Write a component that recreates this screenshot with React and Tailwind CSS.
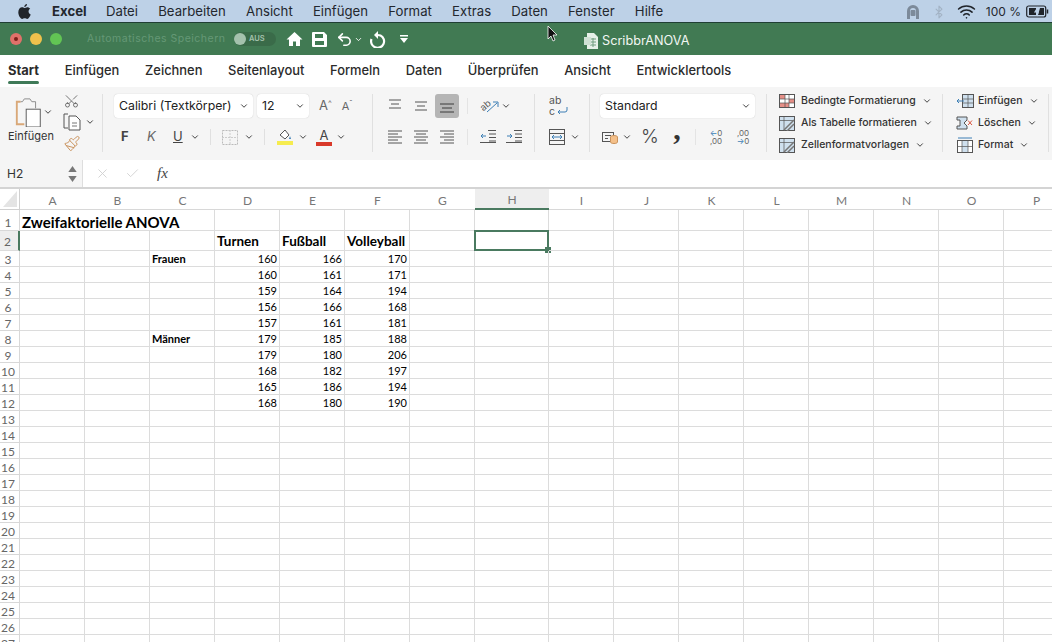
import { ChevronDown, Undo2, Wifi, Bluetooth, X, Check, Scissors, Paintbrush } from "lucide-react";

const MENU = ["Datei", "Bearbeiten", "Ansicht", "Einfügen", "Format", "Extras", "Daten", "Fenster", "Hilfe"];
const TABS = ["Einfügen", "Zeichnen", "Seitenlayout", "Formeln", "Daten", "Überprüfen", "Ansicht", "Entwicklertools"];
const COLS = ["A", "B", "C", "D", "E", "F", "G", "H", "I", "J", "K", "L", "M", "N", "O", "P"];

// row number -> cells by column letter
const DATA = {
  1: { A: "Zweifaktorielle ANOVA" },
  2: { D: "Turnen", E: "Fußball", F: "Volleyball" },
  3: { C: "Frauen", D: 160, E: 166, F: 170 },
  4: { D: 160, E: 161, F: 171 },
  5: { D: 159, E: 164, F: 194 },
  6: { D: 156, E: 166, F: 168 },
  7: { D: 157, E: 161, F: 181 },
  8: { C: "Männer", D: 179, E: 185, F: 188 },
  9: { D: 179, E: 180, F: 206 },
  10: { D: 168, E: 182, F: 197 },
  11: { D: 165, E: 186, F: 194 },
  12: { D: 168, E: 180, F: 190 },
};

function Chev({ className = "" }) {
  return <ChevronDown size={10} strokeWidth={2.4} className={`text-[#444] shrink-0 ${className}`} />;
}

function Lines({ widths, active }) {
  return (
    <svg width="16" height="14" viewBox="0 0 16 14" className="shrink-0">
      {widths.map(([y, a, b]) => (
        <path key={y} d={`M${a} ${y}H${b}`} stroke={active ? "#3a3a3a" : "#555"} strokeWidth="1" />
      ))}
    </svg>
  );
}

function AppleLogo() {
  return (
    <svg width="13" height="15" viewBox="0 0 13 15" fill="#20242a">
      <path d="M9 0c.1 1.600-1.200 3-2.700 3C6.100 1.500 7.500.1 9 0ZM6.400 4c.7 0 1.600-.8 2.900-.8 1.100 0 2.200.6 2.900 1.600-2.400 1.400-2 4.700.5 5.700-.6 1.700-2 4.400-3.500 4.400-.9 0-1.400-.6-2.500-.6s-1.700.6-2.500.6C2.400 14.900.3 11.400.3 8.300.3 5.200 2.300 3.300 4 3.300c1 0 1.800.7 2.400.7Z" />
    </svg>
  );
}

function MenuBar() {
  return (
    <div className="h-[22px] bg-[#bdd1e7] flex items-center pt-[1px] text-[13.2px] text-[#23272e] shrink-0">
      <div className="ml-[18px] w-[34px]"><AppleLogo /></div>
      <span className="font-bold w-[54px]">Excel</span>
      <div className="flex gap-[20.2px]">
        {MENU.map((m) => <span key={m}>{m}</span>)}
      </div>
      <div className="ml-auto flex items-center">
        <svg width="16" height="17" viewBox="0 0 16 17" className="mr-[11px]">
          <path d="M2 16V8a6 6 0 0 1 12 0v8h-3V8a3 3 0 0 0-6 0v8Z" fill="#7c8a9a" />
          <rect x="5.500" y="7" width="5" height="6" rx="1" fill="#7c8a9a" />
        </svg>
        <Bluetooth size={14} className="text-[#a3b3c5] mr-[11px]" />
        <Wifi size={19} strokeWidth={2} className="text-[#20242a] mr-[10px]" />
        <span className="text-[12px] mr-[5px]">100 %</span>
        <svg width="24" height="13" viewBox="0 0 24 13" className="mr-[2px]">
          <rect x=".7" y="1" width="19" height="11" rx="2" fill="none" stroke="#20242a" strokeWidth="1.200" />
          <path d="M3 3h7v7H3ZM14 3h4v7h-6Z" fill="#20242a" />
          <path d="M12 2 9 7h3l-1 4" fill="none" stroke="#bdd1e7" strokeWidth="1.200" />
          <path d="M21.500 4.500v4" stroke="#20242a" strokeWidth="1.500" />
        </svg>
      </div>
    </div>
  );
}

function TitleBar() {
  return (
    <div className="h-[33px] bg-[#417a53] border-t border-[#1f3f34] flex items-center relative shrink-0">
      <div className="ml-[10px] flex gap-[8px] items-center">
        <span className="w-[12px] h-[12px] rounded-full bg-[#e0716a] flex items-center justify-center">
          <span className="w-[4px] h-[4px] rounded-full bg-[#7a1f1a]" />
        </span>
        <span className="w-[12px] h-[12px] rounded-full bg-[#efc14c]" />
        <span className="w-[12px] h-[12px] rounded-full bg-[#62c554]" />
      </div>
      <span className="ml-[25px] text-[10.5px] text-[#659876] tracking-[0.5px] w-[146px] whitespace-nowrap">Automatisches Speichern</span>
      <div className="w-[42px] h-[14px] rounded-full bg-[#3a6b49] flex items-center ml-[1px]">
        <span className="w-[12px] h-[12px] rounded-full bg-[#a4c2ad]" />
        <span className="text-[7.5px] font-semibold text-[#a4c2ad] ml-[3px]">AUS</span>
      </div>
      <svg width="17" height="16" viewBox="0 0 17 16" className="ml-[10px]">
        <path d="M8.500 1 0.500 8.500h2.500V15h4v-4.500h3V15h4V8.500h2.500Z" fill="#fff" />
      </svg>
      <svg width="15" height="15" viewBox="0 0 15 15" className="ml-[9px]">
        <path fillRule="evenodd" d="M1 0h11l3 3v11a1 1 0 0 1-1 1H1a1 1 0 0 1-1-1V1a1 1 0 0 1 1-1Zm2 2v4h8V2Zm0 7v4h9V9Z" fill="#fff" />
      </svg>
      <Undo2 size={17} strokeWidth={2.2} className="text-white ml-[9px]" />
      <ChevronDown size={9} strokeWidth={2.4} className="text-white ml-[1px]" />
      <svg width="16" height="17" viewBox="0 0 16 17" className="ml-[7px]">
        <path d="M1.500 8a6.500 6.500 0 1 0 9-3.500L7.500 4" fill="none" stroke="#fff" strokeWidth="2.200" />
        <path d="M8 0v8L4 4Z" fill="#fff" />
      </svg>
      <svg width="8" height="8" viewBox="0 0 8 8" className="ml-[14px]">
        <path d="M0 0h8v1.500H0ZM0 3h8L4 8Z" fill="#fff" />
      </svg>
      <div className="absolute left-[584px] top-[8px] flex items-center gap-[5px]">
        <svg width="14" height="16" viewBox="0 0 14 16">
          <path d="M3 0h7l4 4v12H3Z" fill="#e6efe8" />
          <path d="M6 6h6M6 9h6M6 12h6M9 5v9" stroke="#6f9c7e" />
          <rect x="0" y="4" width="7" height="8" fill="#cfe0d4" />
        </svg>
        <span className="text-[12.7px] text-[#f1f6f2] -ml-[1px]">ScribbrANOVA</span>
      </div>
      <svg width="12" height="18" viewBox="0 0 12 18" className="absolute left-[547px] top-[2px]">
        <path d="M1 1v13l3-3 2 5 2-1-2-5h4Z" fill="#111" stroke="#fff" strokeWidth=".8" />
      </svg>
    </div>
  );
}

function Tabs() {
  return (
    <div className="h-[32px] bg-white flex items-center pl-[8px] gap-[25.700px] text-[12.9px] text-[#2b2b2b] shrink-0">
      <span className="relative font-bold">
        Start
        <span className="absolute left-0 right-0 top-[20px] h-[3px] rounded-full bg-[#3f7a58]" />
      </span>
      {TABS.map((t) => <span key={t} className="font-medium">{t}</span>)}
    </div>
  );
}

function ClipboardGroup() {
  return (
    <div className="w-[103px] border-r border-[#e0e0e0] flex shrink-0">
      <div className="w-[63px] flex flex-col items-center pt-[2px]">
        <div className="flex items-center pl-[4px] h-[32px]">
          <svg width="30" height="30" viewBox="0 0 30 32">
            <path d="M6 5H2v24h8" fill="none" stroke="#d9a878" strokeWidth="2" />
            <path d="M6 5h2l2-3h6l2 3h4v7" fill="none" stroke="#8a8a8a" />
            <rect x="12" y="13" width="15" height="19" fill="#fff" stroke="#555" />
          </svg>
          <Chev className="ml-[-1px]" />
        </div>
        <span className="text-[11px] text-[#333] -ml-[1px]">Einfügen</span>
      </div>
      <div className="flex flex-col items-start -mt-[1px] gap-[2px]">
        <Scissors size={17} strokeWidth={1.200} className="text-[#555] -rotate-90" />
        <div className="flex items-center mt-[2px]">
          <svg width="19" height="18" viewBox="0 0 19 18">
            <path d="M5 1H1v14h4" fill="none" stroke="#555" />
            <path d="M6 3h7l4 4v10H6Z" fill="#fff" stroke="#555" />
            <path d="M9 10h5M9 13h5" stroke="#777" />
          </svg>
          <Chev className="ml-[3px]" />
        </div>
        <Paintbrush size={18} strokeWidth={1.400} className="text-[#c9935e] mt-[2px]" />
      </div>
    </div>
  );
}

function FontGroup() {
  return (
    <div className="w-[270px] border-r border-[#e0e0e0] pl-[11px] shrink-0">
      <div className="flex items-center">
        <div className="w-[139px] h-[24px] bg-white rounded-[4px] shadow-[0_0_1px_#bbb] flex items-center pl-[5px] pr-[4px] text-[12.3px] text-[#222]">
          <span className="whitespace-nowrap">Calibri (Textkörper)</span>
          <Chev className="ml-auto" />
        </div>
        <div className="ml-[4px] w-[52px] h-[24px] bg-white rounded-[4px] shadow-[0_0_1px_#bbb] flex items-center pl-[5px] pr-[4px] text-[12.3px] text-[#222]">
          12
          <Chev className="ml-auto" />
        </div>
        <span className="ml-[10px] text-[13px] text-[#666]">A<sup className="text-[8px]">^</sup></span>
        <span className="ml-[10px] text-[11px] text-[#666]">A<sup className="text-[8px]">ˇ</sup></span>
      </div>
      <div className="flex items-center mt-[7px] h-[24px] text-[13px] text-[#444]">
        <span className="ml-[7px] w-[26px] font-bold">F</span>
        <span className="w-[26px] italic text-[#666]">K</span>
        <span className="w-[17px] underline">U</span>
        <Chev />
        <span className="ml-[10px] w-px h-[16px] bg-[#e0e0e0]" />
        <svg width="16" height="15" viewBox="0 0 16 15" className="ml-[11px]">
          <rect x=".5" y=".5" width="15" height="14" fill="none" stroke="#bbb" strokeDasharray="2 1" />
          <path d="M8 0v15M0 7.500h16" stroke="#ccc" strokeDasharray="2 1" />
        </svg>
        <Chev className="ml-[6px]" />
        <span className="ml-[10px] w-px h-[16px] bg-[#e0e0e0]" />
        <div className="ml-[12px] w-[16px] flex flex-col items-center">
          <svg width="14" height="12" viewBox="0 0 14 12">
            <path d="M2 6l5-5 4 5-4 4Z" fill="#fff" stroke="#555" />
            <path d="M12 7l1 3h-2Z" fill="#3d7fb5" />
          </svg>
          <span className="w-[16px] h-[4px] bg-[#f6ec4f]" />
        </div>
        <Chev className="ml-[5px]" />
        <div className="ml-[8px] w-[16px] flex flex-col items-center leading-none">
          <span className="text-[13px] text-[#444] h-[12px] leading-[12px]">A</span>
          <span className="w-[16px] h-[4px] bg-[#d9392a] mt-[1px]" />
        </div>
        <Chev className="ml-[4px]" />
      </div>
    </div>
  );
}

function AlignGroup() {
  return (
    <div className="w-[162px] border-r border-[#e0e0e0] pl-[14px] shrink-0">
      <div className="flex items-center h-[24px]">
        <Lines widths={[[1, 2, 14], [5, 4, 12], [9, 2, 14]]} />
        <span className="ml-[10px]"><Lines widths={[[3, 2, 14], [7, 4, 12], [11, 2, 14]]} /></span>
        <div className="w-[24px] h-[24px] rounded-[3px] bg-[#b5b5b5] flex items-center justify-center ml-[6px]">
          <Lines active widths={[[5, 1, 15], [9, 3, 13], [13, 1, 15]]} />
        </div>
        <span className="ml-[8px] w-px h-[16px] bg-[#e4e4e4]" />
        <div className="ml-[11px] w-[19px] h-[18px] relative">
          <span className="block -rotate-[40deg] text-[9.5px] leading-[12px] text-[#555]">ab</span>
          <svg width="13" height="12" viewBox="0 0 13 12" className="absolute left-[7px] top-[4px]">
            <path d="M1 11 11 2M7 1h5v5" fill="none" stroke="#3d7fb5" />
          </svg>
        </div>
        <Chev className="ml-[3px]" />
      </div>
      <div className="flex items-center h-[24px] mt-[7px]">
        <Lines widths={[[1, 1, 15], [4, 1, 11], [7, 1, 15], [10, 1, 11], [13, 1, 15]]} />
        <span className="ml-[10px]"><Lines widths={[[1, 1, 15], [4, 3, 13], [7, 1, 15], [10, 3, 13], [13, 1, 15]]} /></span>
        <span className="ml-[10px]"><Lines widths={[[1, 1, 15], [4, 5, 15], [7, 1, 15], [10, 5, 15], [13, 1, 15]]} /></span>
        <span className="ml-[12px] w-px h-[16px] bg-[#e4e4e4]" />
        <svg width="16" height="14" viewBox="0 0 16 14" className="ml-[12px]">
          <path d="M8 1h8M9 4.500h7M9 8h7M9 11.500h7M0 13h16" stroke="#555" transform="translate(0 -.5)" />
          <path d="M6 6H1M3 4 1 6l2 2" fill="none" stroke="#3d7fb5" />
        </svg>
        <svg width="16" height="14" viewBox="0 0 16 14" className="ml-[10px]">
          <path d="M8 1h8M9 4.500h7M9 8h7M9 11.500h7M0 13h16" stroke="#555" transform="translate(0 -.5)" />
          <path d="M1 6h5M4 4l2 2-2 2" fill="none" stroke="#3d7fb5" />
        </svg>
      </div>
    </div>
  );
}

function WrapGroup() {
  return (
    <div className="w-[55px] border-r border-[#e0e0e0] pl-[14px] shrink-0">
      <div className="h-[24px] flex flex-col justify-center text-[10.5px] leading-[11px] text-[#555]">
        <span>ab</span>
        <div className="flex items-center">
          <span>c</span>
          <svg width="12" height="9" viewBox="0 0 12 9" className="ml-[1px]">
            <path d="M11 0v3a2 2 0 0 1-2 2H2M4 3 2 5l2 2" fill="none" stroke="#3d7fb5" />
          </svg>
        </div>
      </div>
      <div className="h-[24px] mt-[7px] flex items-center">
        <svg width="16" height="16" viewBox="0 0 16 16">
          <rect x=".5" y=".5" width="15" height="15" fill="none" stroke="#555" />
          <path d="M0 4.500h16M0 11.500h16" stroke="#555" />
          <path d="M3 8h10M5 6 3 8l2 2M11 6l2 2-2 2" fill="none" stroke="#3d7fb5" />
        </svg>
        <Chev className="ml-[5px]" />
      </div>
    </div>
  );
}

function NumberGroup() {
  return (
    <div className="w-[177px] border-r border-[#e0e0e0] pl-[10px] shrink-0">
      <div className="w-[155px] h-[24px] bg-white rounded-[4px] shadow-[0_0_1px_#bbb] flex items-center pl-[5px] pr-[4px] text-[12.3px] text-[#222]">
        Standard
        <Chev className="ml-auto" />
      </div>
      <div className="flex items-center h-[24px] mt-[7px]">
        <svg width="16" height="14" viewBox="0 0 16 14" className="ml-[2px]">
          <rect x=".5" y="2.500" width="11" height="9" fill="none" stroke="#555" />
          <path d="M3 5.500h6M3 8.500h3" stroke="#555" />
          <ellipse cx="12" cy="7" rx="3.500" ry="1.500" fill="#f4c08a" stroke="#c9935e" />
          <path d="M8.500 7v5c0 2 7 2 7 0V7" fill="#f4c08a" stroke="#c9935e" />
        </svg>
        <Chev className="ml-[4px]" />
        <span className="ml-[8px] w-[20px] text-center text-[19px] font-light text-[#444]">%</span>
        <span className="ml-[8px] w-[18px] text-center text-[30px] leading-none font-bold text-[#333] font-['Liberation_Serif',serif] -mt-[17px]">,</span>
        <span className="ml-[9px] w-px h-[16px] bg-[#e4e4e4]" />
        <span className="ml-[11px] w-[18px] text-center text-[8px] leading-[8px] text-[#666]">
          <span className="text-[#3d7fb5]">←</span>0<br />,00
        </span>
        <span className="ml-[9px] w-[18px] text-center text-[8px] leading-[8px] text-[#666]">
          ,00<br /><span className="text-[#3d7fb5]">→</span>0
        </span>
      </div>
    </div>
  );
}

function StyleIcon({ kind }) {
  if (kind === "cond") {
    return (
      <svg width="16" height="14" viewBox="0 0 16 14">
        <rect x=".5" y=".5" width="15" height="13" fill="#fff" stroke="#555" />
        <path d="M1 1h5v4H1ZM10 5h5v4h-5ZM1 9h9v4H1Z" fill="#e58f87" />
        <path d="M0 5h16M0 9h16M6 0v14M10 0v14" stroke="#555" strokeWidth=".7" />
      </svg>
    );
  }
  if (kind === "table" || kind === "cell") {
    return (
      <svg width="16" height="15" viewBox="0 0 16 15">
        <rect x=".5" y=".5" width="15" height="14" fill="#cfe0ee" stroke="#555" />
        <path d="M0 4.500h16M5 0v15" stroke="#555" strokeWidth=".7" />
        <path d="M5 14 15 4M8 15 15 8" stroke="#777" strokeWidth="1.500" />
      </svg>
    );
  }
  if (kind === "ins") {
    return (
      <svg width="18" height="14" viewBox="0 0 18 14">
        <rect x="6.500" y=".5" width="11" height="13" fill="#cfe0ee" stroke="#555" />
        <path d="M6 5h12M6 9h12M12 0v14" stroke="#555" strokeWidth=".7" />
        <path d="M8 7H1M3 5 1 7l2 2" fill="none" stroke="#3d7fb5" />
      </svg>
    );
  }
  if (kind === "del") {
    return (
      <svg width="18" height="14" viewBox="0 0 18 14">
        <path d="M1 1h10v3L8 7l3 3v3H1v-3h3V4H1Z" fill="#cfe0ee" stroke="#555" />
        <path d="M12 4.500l4 4.500M16 4.500 12 9" stroke="#d9553f" />
      </svg>
    );
  }
  return (
    <svg width="18" height="16" viewBox="0 0 18 16">
      <rect x="1.500" y="3.500" width="15" height="12" fill="#fff" stroke="#555" />
      <rect x="6" y="4" width="6" height="11" fill="#cfe0ee" />
      <path d="M1 9.500h16M6 4v11M12 4v11" stroke="#555" strokeWidth=".7" />
      <path d="M2 1h14" stroke="#3d7fb5" />
    </svg>
  );
}

function ListItem({ icon, label }) {
  return (
    <div className="flex items-center h-[22px] text-[10.5px] text-[#333] font-medium whitespace-nowrap">
      <span className="w-[22px] flex items-center shrink-0"><StyleIcon kind={icon} /></span>
      <span>{label}</span>
      <Chev className="ml-[6px]" />
    </div>
  );
}

function Ribbon() {
  return (
    <div className="h-[73px] bg-[#f5f5f5] flex pt-[7px] pb-[8px] shrink-0 overflow-hidden">
      <ClipboardGroup />
      <FontGroup />
      <AlignGroup />
      <WrapGroup />
      <NumberGroup />
      <div className="w-[176px] border-r border-[#e0e0e0] pl-[12px] shrink-0">
        <div className="-mt-[4px]">
          <ListItem icon="cond" label="Bedingte Formatierung" />
          <ListItem icon="table" label="Als Tabelle formatieren" />
          <ListItem icon="cell" label="Zellenformatvorlagen" />
        </div>
      </div>
      <div className="w-[106px] border-r border-[#e0e0e0] pl-[13px] shrink-0">
        <div className="-mt-[4px]">
          <ListItem icon="ins" label="Einfügen" />
          <ListItem icon="del" label="Löschen" />
          <ListItem icon="fmt" label="Format" />
        </div>
      </div>
    </div>
  );
}

function FormulaBar() {
  return (
    <div className="h-[29px] bg-white border-b-2 border-[#d4d4d4] flex items-center shrink-0">
      <div className="w-[83px] h-full bg-[#f5f5f5] border-r border-[#dedede] flex items-center pl-[7px] text-[12px] text-[#333]">
        H2
        <div className="ml-auto mr-[5px] flex flex-col">
          <svg width="9" height="6" viewBox="0 0 7 5"><path d="M3.500 0 7 5H0Z" fill="#777" /></svg>
          <svg width="9" height="6" viewBox="0 0 7 5" className="mt-[4px]"><path d="M3.500 5 7 0H0Z" fill="#777" /></svg>
        </div>
      </div>
      <X size={15} strokeWidth={1.400} className="text-[#cfcfcf] ml-[12px]" />
      <Check size={15} strokeWidth={1.400} className="text-[#cfcfcf] ml-[15px]" />
      <span className="ml-[17px] font-['Liberation_Serif',serif] italic text-[15px] text-[#444]">fx</span>
    </div>
  );
}

function Cell({ col, row }) {
  const value = DATA[row]?.[col];
  const numeric = typeof value === "number";
  const selected = col === "H" && row === 2;
  // the title runs over A and B, so those two have no line on the right
  const border = row === 1 && (col === "A" || col === "B") ? "border-b" : "border-r border-b";
  let text = "text-[11px] pt-[2px]";
  if (row === 1) text = "text-[15px] font-bold pt-[4px]";
  else if (row === 2) text = "text-[13.5px] font-bold pt-[2px]";
  else if (!numeric && value) text = "text-[11px] font-bold pt-[2px]";
  return (
    <div
      className={`relative ${border} border-[#dcdcdc] flex items-center whitespace-nowrap text-black px-[2px] min-w-0 ${text} ${numeric ? "justify-end" : ""}`}
    >
      {value}
      {selected && (
        <>
          <span className="absolute -left-px -top-px -right-px -bottom-px border-2 border-[#4a7a60]" />
          <span className="absolute -right-[3px] -bottom-[3px] w-[6px] h-[6px] bg-[#4a7a60]" />
        </>
      )}
    </div>
  );
}

function Row({ row }) {
  let pad = "pt-[2px]";
  if (row === 1) pad = "pt-[5px]";
  else if (row === 2) pad = "pt-[3px]";
  return (
    <>
      <div
        className={`flex items-center justify-center pr-[3px] text-[12px] text-[#666] border-b ${pad} ${row === 2 ? "bg-[#eeeeee] border-r-2 border-r-[#4a7a60] border-b-[#dcdcdc]" : "border-r border-[#d8d8d8]"}`}
      >
        {row}
      </div>
      {COLS.map((c) => <Cell key={c} col={c} row={row} />)}
    </>
  );
}

function Sheet() {
  const rows = Array.from({ length: 27 }, (_, i) => i + 1);
  return (
    <div className="grid grid-cols-[20px_repeat(7,65px)_74px_repeat(8,65px)] grid-rows-[21px_21px_20px_repeat(25,16px)] font-['Lato',sans-serif] bg-white overflow-hidden flex-1 min-h-0">
      <div className="border-r border-b border-[#d0d0d0] flex items-end justify-end pr-[2px] pb-[2px]">
        <span className="w-0 h-0 border-l-[14px] border-l-transparent border-b-[16px] border-b-[#e4e4e4]" />
      </div>
      {COLS.map((c) => (
        <div
          key={c}
          className={`flex items-center justify-center pt-[3px] text-[12px] text-[#777] ${c === "H" ? "bg-[#eeeeee] border-b-2 border-[#4a7a60]" : "border-b border-[#d8d8d8]"}`}
        >
          {c}
        </div>
      ))}
      {rows.map((r) => (
        <Row key={r} row={r} />
      ))}
    </div>
  );
}

export default function App() {
  return (
    <div className="w-[1052px] h-[642px] overflow-hidden flex flex-col bg-white font-['Inter','Liberation_Sans',sans-serif]">
      <MenuBar />
      <TitleBar />
      <Tabs />
      <Ribbon />
      <FormulaBar />
      <Sheet />
    </div>
  );
}
